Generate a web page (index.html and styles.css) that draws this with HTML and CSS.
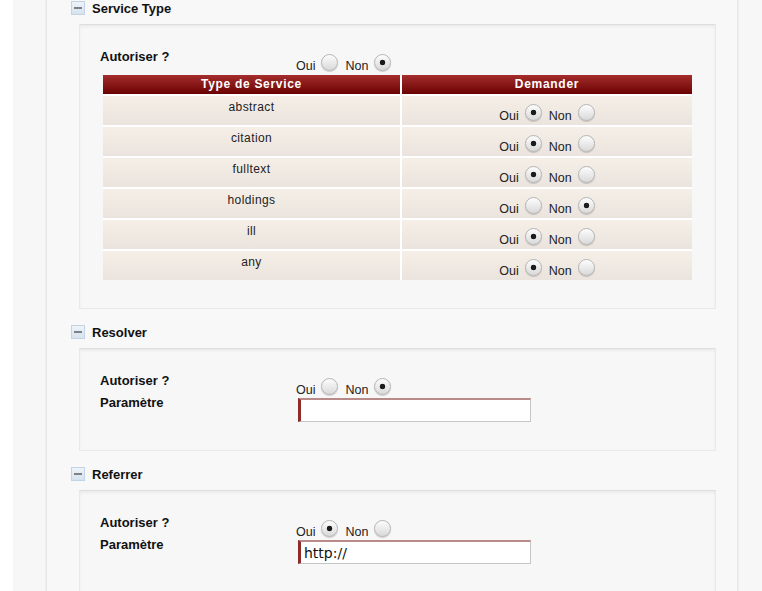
FILE: index.html
```html
<!DOCTYPE html>
<html lang="fr">
<head>
<meta charset="utf-8">
<title>Service Type</title>
<link rel="stylesheet" href="styles.css">
</head>
<body>
<div class="wrap">
  <div class="main">
    <section class="sec sec-first">
      <div class="sec-head"><span class="toggle"></span><span class="sec-title">Service Type</span></div>
      <div class="box">
        <div class="row">
          <div class="label">Autoriser ?</div>
          <div class="value choice">
            <span class="opt">Oui</span><input class="radio" type="radio" name="st"><span class="opt">Non</span><input class="radio" type="radio" name="st" checked>
          </div>
        </div>
        <div class="grid">
          <div class="th">Type de Service</div>
          <div class="th">Demander</div>

          <div class="td name">abstract</div>
          <div class="td ask"><span class="opt">Oui</span><input class="radio" type="radio" name="r1" checked><span class="opt">Non</span><input class="radio" type="radio" name="r1"></div>

          <div class="td name">citation</div>
          <div class="td ask"><span class="opt">Oui</span><input class="radio" type="radio" name="r2" checked><span class="opt">Non</span><input class="radio" type="radio" name="r2"></div>

          <div class="td name">fulltext</div>
          <div class="td ask"><span class="opt">Oui</span><input class="radio" type="radio" name="r3" checked><span class="opt">Non</span><input class="radio" type="radio" name="r3"></div>

          <div class="td name">holdings</div>
          <div class="td ask"><span class="opt">Oui</span><input class="radio" type="radio" name="r4"><span class="opt">Non</span><input class="radio" type="radio" name="r4" checked></div>

          <div class="td name">ill</div>
          <div class="td ask"><span class="opt">Oui</span><input class="radio" type="radio" name="r5" checked><span class="opt">Non</span><input class="radio" type="radio" name="r5"></div>

          <div class="td name">any</div>
          <div class="td ask"><span class="opt">Oui</span><input class="radio" type="radio" name="r6" checked><span class="opt">Non</span><input class="radio" type="radio" name="r6"></div>
        </div>
      </div>
    </section>

    <section class="sec">
      <div class="sec-head"><span class="toggle"></span><span class="sec-title">Resolver</span></div>
      <div class="box">
        <div class="row">
          <div class="label">Autoriser ?</div>
          <div class="value choice">
            <span class="opt">Oui</span><input class="radio" type="radio" name="res"><span class="opt">Non</span><input class="radio" type="radio" name="res" checked>
          </div>
        </div>
        <div class="row">
          <div class="label">Paramètre</div>
          <div class="value"><input class="field" type="text" value=""></div>
        </div>
      </div>
    </section>

    <section class="sec">
      <div class="sec-head"><span class="toggle"></span><span class="sec-title">Referrer</span></div>
      <div class="box">
        <div class="row">
          <div class="label">Autoriser ?</div>
          <div class="value choice">
            <span class="opt">Oui</span><input class="radio" type="radio" name="ref" checked><span class="opt">Non</span><input class="radio" type="radio" name="ref">
          </div>
        </div>
        <div class="row">
          <div class="label">Paramètre</div>
          <div class="value"><input class="field" type="text" value="http://"></div>
        </div>
      </div>
    </section>
  </div>
</div>
</body>
</html>
```
FILE: styles.css
```css
html, body {
  margin: 0;
  padding: 0;
  background: #ffffff;
  font-family: "Liberation Sans", Arial, sans-serif;
  color: #111;
}

.wrap {
  margin-left: 13px;
  background: #f7f7f7;
  padding-left: 33px;
  min-height: 591px;
  overflow: hidden;
}

.main {
  width: 692px;
  min-height: 600px;
  background: #f8f8f8;
  border-left: 1px solid #e6e6e6;
  border-right: 1px solid #e8e8e8;
  box-shadow: -1px 0 1px rgba(0,0,0,0.03), 1px 0 1px rgba(0,0,0,0.03);
  padding-left: 24px;
  box-sizing: border-box;
}

.sec {
  margin-top: 14px;
}
.sec-first {
  margin-top: -1px;
}

.sec-head {
  height: 18px;
  display: flex;
  align-items: center;
  margin-bottom: 7px;
}

.toggle {
  width: 12px;
  height: 12px;
  border: 1px solid #c2d3e4;
  background: linear-gradient(#eef3f9, #d6e2ee);
  margin-right: 7px;
  display: flex;
  align-items: center;
  justify-content: center;
}
.toggle::before {
  content: "";
  width: 8px;
  height: 2px;
  background: #7d8187;
}

.sec-title {
  font-weight: bold;
  font-size: 13px;
  color: #111;
}

.box {
  margin-left: 8px;
  width: 637px;
  box-sizing: border-box;
  border: 1px solid #e9e9e9;
  border-top-color: #dedede;
  background: #f7f7f7;
  box-shadow: inset 0 2px 3px rgba(0,0,0,0.05);
  padding: 24px 24px 28px 20px;
}

.row {
  display: flex;
}

.label {
  width: 196px;
  flex: none;
  font-weight: bold;
  font-size: 13px;
  line-height: 16px;
  color: #111;
}

.value {
  display: flex;
}

.choice {
  padding-top: 5px;
  align-items: flex-end;
}

.opt {
  font-size: 12.5px;
  line-height: 14px;
  color: #222;
  margin-bottom: -2px;
}

.radio {
  appearance: none;
  -webkit-appearance: none;
  width: 17px;
  height: 17px;
  margin: 0 7px 0 6px;
  border-radius: 50%;
  border: 1px solid #b5b5b5;
  box-sizing: border-box;
  background: linear-gradient(#fdfdfd, #d9d9d9);
  box-shadow: 0 1px 1px rgba(0,0,0,0.18);
  flex: none;
}
.radio:checked {
  background: radial-gradient(circle at center, #1c1c1c 0 2.5px, transparent 3.1px), linear-gradient(#fdfdfd, #d9d9d9);
}

.grid {
  margin: 4px 0 0 3px;
  width: 589px;
  display: grid;
  grid-template-columns: 297px 290px;
  column-gap: 2px;
  row-gap: 2px;
  background: #ffffff;
}

.th {
  height: 19px;
  line-height: 19px;
  text-align: center;
  color: #fff;
  font-weight: bold;
  font-size: 12px;
  letter-spacing: 0.7px;
  background: linear-gradient(#a52d2d, #6a0202);
}

.td {
  height: 29px;
  box-sizing: border-box;
  background: linear-gradient(#f6efe7, #ebe4de);
}

.name {
  text-align: center;
  font-size: 12px;
  line-height: 14px;
  padding-top: 4px;
  letter-spacing: 0.4px;
  color: #222;
}

.ask {
  display: flex;
  justify-content: center;
  align-items: flex-end;
  padding-bottom: 4px;
}
.ask .radio:last-child {
  margin-right: 0;
}

.field {
  margin: 3px 0 0 2px;
  width: 233px;
  height: 24px;
  box-sizing: border-box;
  border: 1px solid #c6c6c6;
  border-top: 2px solid #b98a8a;
  border-left: 3px solid #8e2c2c;
  background: #fff;
  padding: 0 3px;
  font-family: "DejaVu Sans", sans-serif;
  font-size: 14px;
  color: #111;
  outline: none;
}
```
